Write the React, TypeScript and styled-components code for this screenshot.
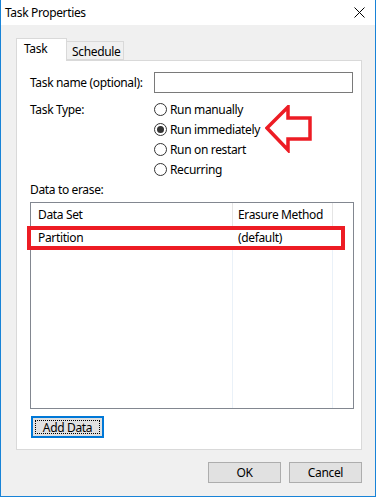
import React, { useState } from 'react';
import styled, { createGlobalStyle } from 'styled-components';

const GlobalStyle = createGlobalStyle`
  html, body {
    margin: 0;
    padding: 0;
    background: #ffffff;
  }
  * {
    box-sizing: border-box;
  }
  body {
    font-family: "Noto Sans", "Liberation Sans", sans-serif;
    font-size: 12px;
    letter-spacing: -0.35px;
    color: #000;
  }
  button, input {
    letter-spacing: inherit;
  }
`;

const radioOptions = ['Run manually', 'Run immediately', 'Run on restart', 'Recurring'];

export default function App() {
  const [tab, setTab] = useState('Task');
  const [taskType, setTaskType] = useState('Run immediately');
  const [name, setName] = useState('');

  return (
    <>
      <GlobalStyle />
      <Window>
        <TitleBar>
          <Title>Task Properties</Title>
          <CloseBtn aria-label="Close">
            <svg width="11" height="11" viewBox="0 0 11 11">
              <path d="M0.5 0.5 L10.5 10.5 M10.5 0.5 L0.5 10.5" stroke="#000" strokeWidth="1" fill="none" />
            </svg>
          </CloseBtn>
        </TitleBar>
        <Body>
          <TabRow>
            <Tab active={tab === 'Task'} onClick={() => setTab('Task')}>Task</Tab>
            <Tab active={tab === 'Schedule'} onClick={() => setTab('Schedule')}>Schedule</Tab>
          </TabRow>
          <Panel>
            <FormGrid>
              <Label>Task name (optional):</Label>
              <TextInput value={name} onChange={(e) => setName(e.target.value)} />
              <Label>Task Type:</Label>
              <RadioGroup>
                {radioOptions.map((opt) => (
                  <RadioRow key={opt} onClick={() => setTaskType(opt)}>
                    <RadioCircle checked={taskType === opt} />
                    <span>{opt}</span>
                  </RadioRow>
                ))}
                <Arrow width="48" height="48" viewBox="0 0 48 48">
                  <path
                    d="M2 23 L23 2 L23 13 L45 13 L45 34 L23 34 L23 45 Z"
                    fill="none"
                    stroke="#ed1c24"
                    strokeWidth="3.5"
                    strokeLinejoin="miter"
                  />
                </Arrow>
              </RadioGroup>
            </FormGrid>
            <SectionLabel>Data to erase:</SectionLabel>
            <ListBox>
              <ListHeader>
                <HeaderCell width={202} pad={7}>Data Set</HeaderCell>
                <HeaderCell width={100} pad={5}>Erasure Method</HeaderCell>
                <HeaderFiller />
              </ListHeader>
              <ListRow>
                <Cell width={202} pad={7}>Partition</Cell>
                <Cell width={100} pad={5}>(default)</Cell>
                <Cell width={20} pad={0} />
              </ListRow>
              <ListBodyFill>
                <FillCol width={202} />
                <FillCol width={100} />
                <FillCol width={20} last />
              </ListBodyFill>
              <Highlight />
            </ListBox>
            <FocusButton>
              <FocusInner>Add Data</FocusInner>
            </FocusButton>
          </Panel>
          <Footer>
            <DialogButton>OK</DialogButton>
            <DialogButton>Cancel</DialogButton>
          </Footer>
        </Body>
      </Window>
    </>
  );
}

const Window = styled.div`
  width: 376px;
  height: 497px;
  display: flex;
  flex-direction: column;
  border: 1px solid #1883d7;
  border-top: none;
  background: #f0f0f0;
`;

const TitleBar = styled.div`
  height: 25px;
  background: #fff;
  display: flex;
  align-items: center;
  justify-content: space-between;
  padding: 0 0 0 4px;
`;

const Title = styled.span`
  line-height: 25px;
`;

const CloseBtn = styled.button`
  width: 32px;
  height: 25px;
  border: none;
  background: transparent;
  display: flex;
  align-items: center;
  justify-content: center;
  padding: 0;
  padding-left: 1px;
`;

const Body = styled.div`
  flex: 1;
  display: flex;
  flex-direction: column;
  padding: 13px 13px 0 15px;
`;

const TabRow = styled.div`
  display: flex;
  align-items: flex-end;
  height: 22px;
  position: relative;
  z-index: 1;
`;

const Tab = styled.div<{ active?: boolean }>`
  height: ${(p) => (p.active ? '23px' : '19px')};
  margin-bottom: ${(p) => (p.active ? '-1px' : '0')};
  padding: ${(p) => (p.active ? '2px 8px 0 7px' : '2px 5px 0 5px')};
  width: ${(p) => (p.active ? '51px' : '57px')};
  background: ${(p) => (p.active ? '#fff' : '#f0f0f0')};
  border: 1px solid #d9d9d9;
  border-bottom: ${(p) => (p.active ? 'none' : '1px solid #d9d9d9')};
  border-left: ${(p) => (p.active ? '1px solid #d9d9d9' : 'none')};
  line-height: 16px;
  white-space: nowrap;
  cursor: default;
`;

const Panel = styled.div`
  height: 390px;
  background: #fff;
  border: 1px solid #d9d9d9;
  padding: 11px 0 0 13px;
  display: flex;
  flex-direction: column;
`;

const FormGrid = styled.div`
  display: grid;
  grid-template-columns: 124px 199px;
  row-gap: 6px;
`;

const Label = styled.div`
  line-height: 21px;
`;

const TextInput = styled.input`
  height: 21px;
  width: 199px;
  border: 1px solid #7a7a7a;
  outline: none;
  padding: 0 3px;
  font: inherit;
`;

const RadioGroup = styled.div`
  position: relative;
  display: flex;
  flex-direction: column;
`;

const RadioRow = styled.label`
  display: flex;
  align-items: center;
  gap: 3px;
  height: 20px;
  cursor: default;
`;

const RadioCircle = styled.span<{ checked?: boolean }>`
  width: 13px;
  height: 13px;
  border-radius: 50%;
  border: 1px solid #333;
  background: #fff;
  display: flex;
  align-items: center;
  justify-content: center;
  &::after {
    content: '';
    width: 7px;
    height: 7px;
    border-radius: 50%;
    background: ${(p) => (p.checked ? '#333' : 'transparent')};
  }
`;

const Arrow = styled.svg`
  position: absolute;
  left: 111px;
  top: 6px;
`;

const SectionLabel = styled.div`
  margin-top: 3px;
  line-height: 16px;
`;

const ListBox = styled.div`
  position: relative;
  margin-top: 4px;
  width: 324px;
  height: 207px;
  border: 1px solid #828790;
  display: flex;
  flex-direction: column;
`;

const ListHeader = styled.div`
  display: flex;
  height: 23px;
`;

const HeaderCell = styled.div<{ width: number; pad: number }>`
  width: ${(p) => p.width}px;
  padding-left: ${(p) => p.pad}px;
  line-height: 23px;
  white-space: nowrap;
  border-right: 1px solid #e5e5e5;
`;

const HeaderFiller = styled.div`
  flex: 1;
`;

const ListRow = styled.div`
  display: flex;
  height: 23px;
`;

const Cell = styled.div<{ width: number; pad: number }>`
  width: ${(p) => p.width}px;
  padding-left: ${(p) => p.pad}px;
  line-height: 23px;
  white-space: nowrap;
`;

const ListBodyFill = styled.div`
  flex: 1;
  display: flex;
`;

const FillCol = styled.div<{ width: number; last?: boolean }>`
  width: ${(p) => p.width}px;
  border-right: ${(p) => (p.last ? 'none' : '1px solid #eaf1f8')};
`;

const Highlight = styled.div`
  position: absolute;
  left: -4px;
  top: 23px;
  width: 318px;
  height: 24px;
  border: 4px solid #ed1c24;
  pointer-events: none;
`;

const FocusButton = styled.button`
  margin-top: 7px;
  width: 73px;
  height: 22px;
  padding: 2px;
  border: 2px solid #0078d7;
  background: #e1e1e1;
  font: inherit;
  align-self: flex-start;
  margin-left: 1px;
`;

const FocusInner = styled.div`
  height: 100%;
  border: 1px dotted #000;
  display: flex;
  align-items: center;
  justify-content: center;
`;

const Footer = styled.div`
  display: flex;
  justify-content: flex-end;
  gap: 8px;
  padding-top: 12px;
`;

const DialogButton = styled.button`
  width: 73px;
  height: 21px;
  border: 1px solid #adadad;
  background: #e1e1e1;
  font: inherit;
  padding: 0;
  color: #000;
`;
